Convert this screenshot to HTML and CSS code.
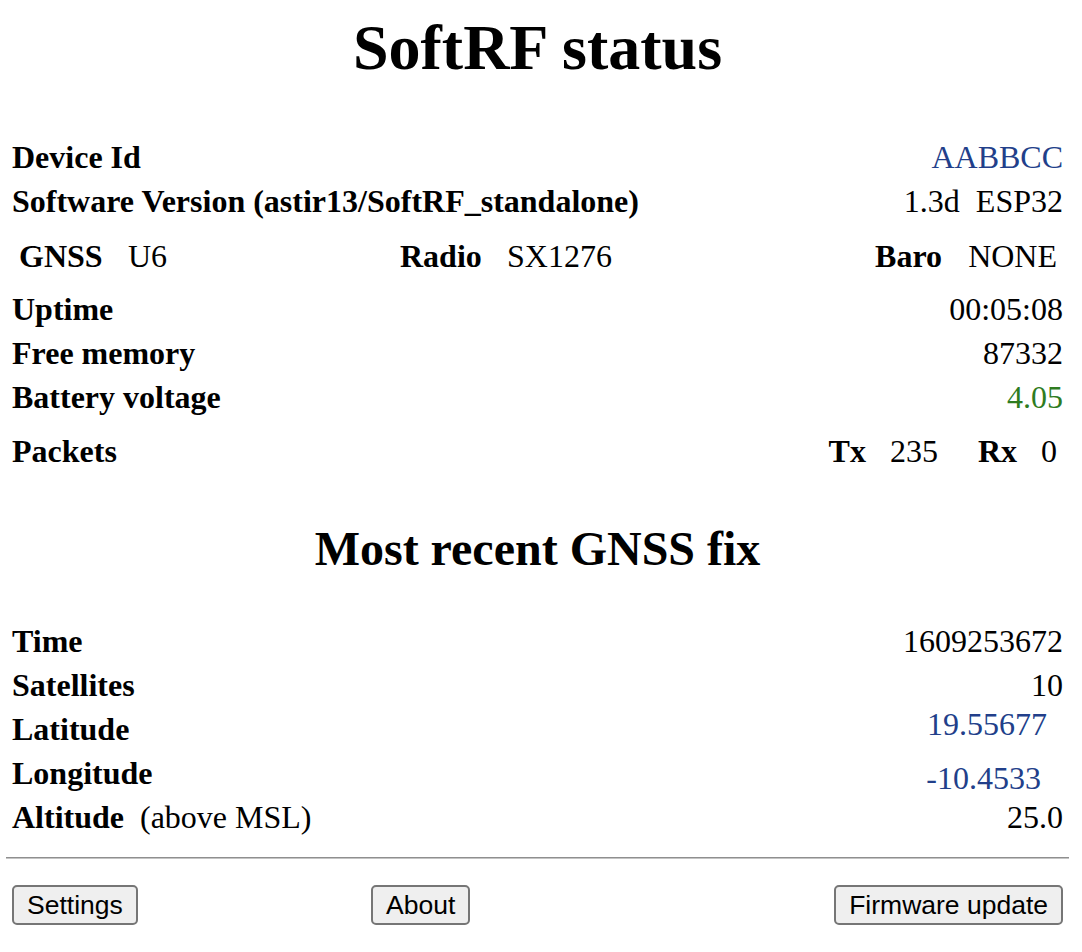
FILE: index.html
```html
<!DOCTYPE html>
<html>
<head>
<meta charset="utf-8">
<title>SoftRF status</title>
<link rel="stylesheet" href="styles.css">
</head>
<body>
<div class="page">
  <h1 class="title">SoftRF status</h1>

  <section class="group first">
    <div class="row"><span class="label">Device Id</span><span class="value blue">AABBCC</span></div>
    <div class="row"><span class="label">Software Version (astir13/SoftRF_standalone)</span><span class="value">1.3d&nbsp;&nbsp;ESP32</span></div>
  </section>

  <section class="group hw">
    <span class="label c1">GNSS</span>
    <span class="c2">U6</span>
    <span class="label c3">Radio</span>
    <span class="c4">SX1276</span>
    <span class="label c5">Baro</span>
    <span class="c6">NONE</span>
  </section>

  <section class="group sys">
    <div class="row"><span class="label">Uptime</span><span class="value">00:05:08</span></div>
    <div class="row"><span class="label">Free memory</span><span class="value">87332</span></div>
    <div class="row"><span class="label">Battery voltage</span><span class="value green">4.05</span></div>
  </section>

  <section class="group packets">
    <div class="row"><span class="label">Packets</span>
      <span class="pk">
        <span class="label">Tx</span><span class="pk-val">235</span>
        <span class="label pk-rx">Rx</span><span class="pk-val">0</span>
      </span>
    </div>
  </section>

  <h2 class="subtitle">Most recent GNSS fix</h2>

  <section class="group fix">
    <div class="row"><span class="label">Time</span><span class="value">1609253672</span></div>
    <div class="row"><span class="label">Satellites</span><span class="value">10</span></div>
    <div class="row"><span class="label">Latitude</span><span class="value blue lat">19.55677</span></div>
    <div class="row"><span class="label">Longitude</span><span class="value blue lon">-10.4533</span></div>
    <div class="row"><span><span class="label">Altitude</span>&nbsp;&nbsp;(above MSL)</span><span class="value">25.0</span></div>
  </section>

  <hr class="sep">

  <div class="buttons">
    <div class="b1"><button class="btn" type="button">Settings</button></div>
    <div class="b2"><button class="btn" type="button">About</button></div>
    <div class="b3"><button class="btn" type="button">Firmware update</button></div>
  </div>
</div>
</body>
</html>
```

FILE: styles.css
```css
html, body {
  margin: 0;
  padding: 0;
  background: #fff;
}

body {
  font-family: "Liberation Serif", "Times New Roman", serif;
  font-size: 32px;
  color: #000;
}

.page {
  margin: 0 13px 0 6px;
  padding-top: 16px;
}

.title {
  margin: 0;
  font-size: 64px;
  line-height: 64px;
  font-weight: bold;
  text-align: center;
}

.label {
  font-weight: bold;
}

.group {
  padding: 0 6px;
}

.row {
  display: flex;
  justify-content: space-between;
  align-items: flex-start;
  height: 44px;
  line-height: 44px;
  white-space: nowrap;
}

.blue { color: #223f8a; }
.green { color: #2f7c1f; }

.first { margin-top: 55px; }

.hw {
  display: grid;
  grid-template-columns: 116px 268px 111px 1fr auto 114px;
  height: 44px;
  line-height: 44px;
  margin-top: 11px;
  padding: 0;
  white-space: nowrap;
}
.hw .c1 { padding-left: 13px; }
.hw .c2 { padding-left: 6px; }
.hw .c3 { padding-left: 10px; }
.hw .c4 { padding-left: 6px; }
.hw .c5 { padding-right: 13px; text-align: right; }
.hw .c6 { padding-right: 12px; text-align: right; }

.sys { margin-top: 9px; }

.packets { margin-top: 10px; padding-right: 12px; }

.pk {
  display: flex;
}
.pk-val { margin-left: 24px; }
.pk-rx { margin-left: 40px; }

.subtitle {
  margin: 52px 0 0;
  font-size: 48px;
  line-height: 48px;
  font-weight: bold;
  text-align: center;
}

.fix { margin-top: 46px; }

.lat { margin-top: -5px; padding-right: 16px; }
.lon { margin-top: 5px; padding-right: 22px; }

.sep {
  margin: 18px 0 0;
  height: 0;
  border: 0;
  border-top: 1px solid #8f8f8f;
  border-bottom: 1px solid #c4c4c4;
}

.buttons {
  display: grid;
  grid-template-columns: 129fr 99fr 231fr;
  margin-top: 26px;
  padding: 0 6px;
}
.b1 { text-align: left; }
.b2 { text-align: center; }
.b3 { text-align: right; }

.btn {
  font-family: "Liberation Sans", Arial, sans-serif;
  font-size: 26.5px;
  line-height: 32px;
  color: #000;
  background: #efefef;
  border: 2px solid #767676;
  border-radius: 5px;
  padding: 2px 13px;
  margin: 0;
}
```
